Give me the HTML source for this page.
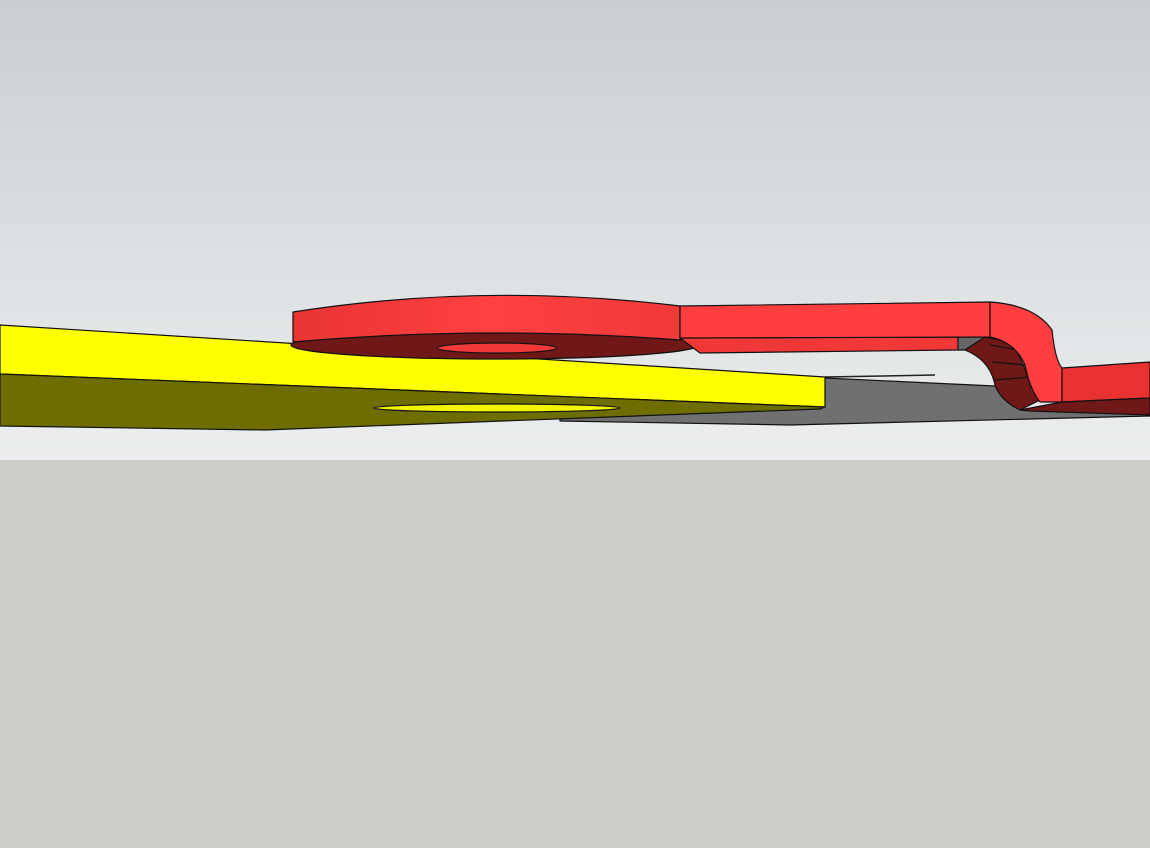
<!DOCTYPE html>
<html><head><meta charset="utf-8"><style>html,body{margin:0;padding:0;width:1150px;height:848px;overflow:hidden;background:#cdcec9}</style></head>
<body>
<svg width="1150" height="848" viewBox="0 0 1150 848" xmlns="http://www.w3.org/2000/svg">
<defs>
<linearGradient id="sky" x1="0" y1="0" x2="0" y2="1">
<stop offset="0" stop-color="#c9ced1"/><stop offset="1" stop-color="#eceeef"/>
</linearGradient>
<linearGradient id="disk" x1="0" y1="0" x2="1" y2="0">
<stop offset="0" stop-color="#e83434"/><stop offset="0.5" stop-color="#ff4040"/><stop offset="1" stop-color="#f03a3a"/>
</linearGradient>
</defs>
<rect x="0" y="0" width="1150" height="460" fill="url(#sky)"/>
<rect x="0" y="460" width="1150" height="388" fill="#cdcec9"/>
<g stroke="#111" stroke-width="1.2" stroke-linejoin="round">
<!-- gray plane -->
<polygon points="560,419 825,378 995,386 1020,410 1150,412 1150,416 790,425 560,421" fill="#707070"/>
<!-- yellow board top face -->
<polygon points="0,325 825,377 825,407 0,374" fill="#ffff00"/>
<!-- olive face -->
<polygon points="0,374 825,407 820,409 265,430 0,426" fill="#6d6d00"/>
<ellipse cx="497" cy="408" rx="123" ry="4" fill="#f4f400"/>
<!-- red disk underside -->
<ellipse cx="495" cy="345" rx="204" ry="14" fill="#701818"/>
<ellipse cx="497" cy="348" rx="60" ry="5" fill="#f33838"/>
<!-- disk side -->
<path d="M293,312 Q485,282 680,306 L680,340 Q485,325 293,342 Z" fill="url(#disk)"/>
<!-- arm lower band -->
<polygon points="680,338 960,337 958,350 700,353" fill="#f03838"/>
<polygon points="958,337 985,337 965,350 958,350" fill="#666"/>
<!-- arm top -->
<polygon points="680,306 990,302 990,337 680,338" fill="#ff3f3f"/>
<!-- inner dark of bend -->
<path d="M985,337 L1012,342 Q1025,365 1030,385 L1040,400 L1020,410 Q1000,400 995,385 Q990,360 965,350 Z" fill="#6e1818"/>
<path d="M990,345 L1018,350 M992,362 L1025,365 M995,380 L1030,377" stroke="#111" fill="none"/>
<!-- bend outer -->
<path d="M990,302 Q1035,305 1052,330 Q1055,360 1062,368 L1062,402 L1040,402 Q1030,390 1025,365 Q1015,342 990,337 Z" fill="#ff3f3f"/>
<!-- right arm -->
<polygon points="1062,368 1150,362 1150,398 1062,402" fill="#e83232"/>
<polygon points="1020,410 1062,402 1150,398 1150,415 1030,411" fill="#6e1818"/>
<line x1="825" y1="377" x2="935" y2="375" stroke="#222" stroke-width="1.5"/>
</g>
</svg>
</body></html>
